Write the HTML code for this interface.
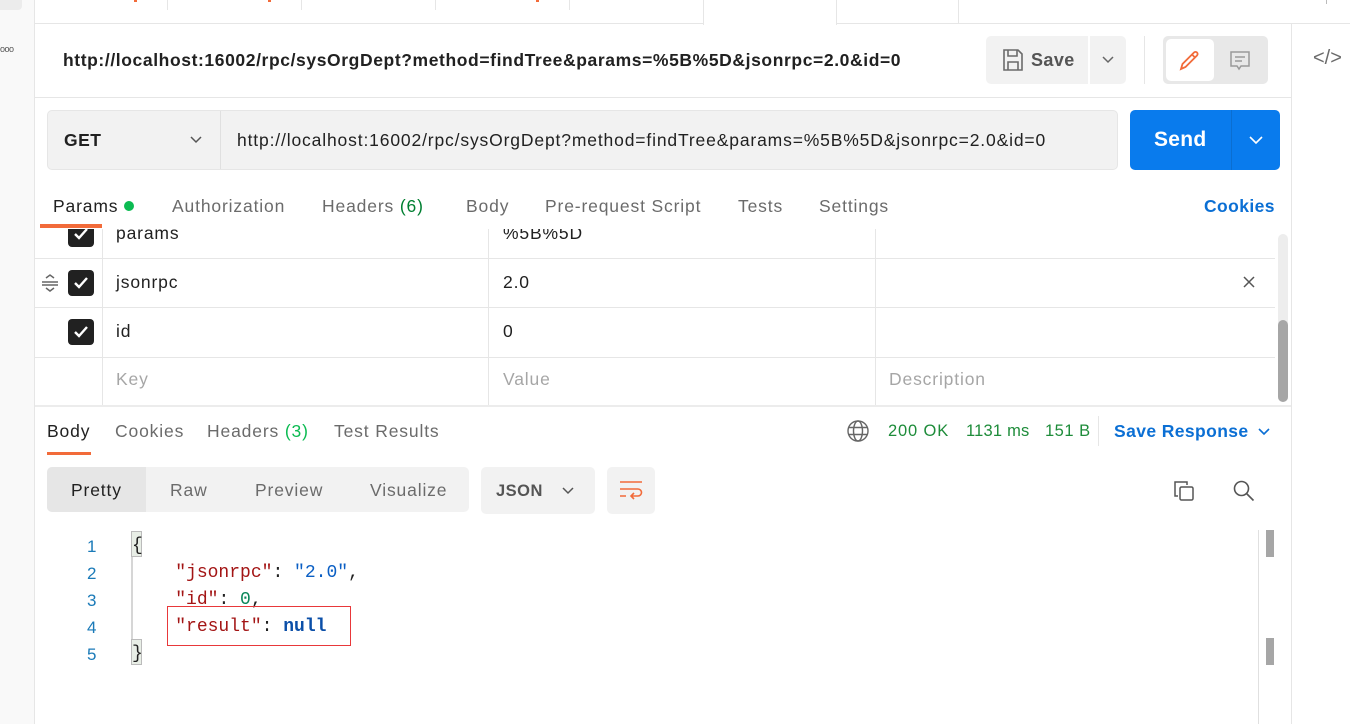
<!DOCTYPE html>
<html><head><meta charset="utf-8"><style>
*{box-sizing:border-box;margin:0;padding:0}
body{width:1350px;height:724px;overflow:hidden;background:#fff;font-family:"Liberation Sans",sans-serif;color:#212121;position:relative}
.a{position:absolute}
.t{font-size:17.5px;white-space:nowrap;letter-spacing:0.85px}
.mono{font-family:"Liberation Mono",monospace;font-size:18px;white-space:pre}
.cb{position:absolute;width:26px;height:26px;background:#212121;border-radius:4px}
.cb svg{position:absolute;left:4px;top:4px}
.hl{position:absolute;left:35px;width:1240px;height:1px;background:#e6e6e6}
</style></head><body>
<div class="a" style="left:0;top:0;width:35px;height:724px;background:#f9f9f9;border-right:1px solid #e6e6e6"></div>
<div class="a" style="left:0;top:0;width:22px;height:10px;background:#ececec;border-radius:0 0 4px 0"></div>
<div class="a" style="left:0;top:44px;font-size:9px;color:#555;letter-spacing:-0.5px">ooo</div>
<div class="a" style="left:35px;top:0;width:1315px;height:24px;border-bottom:1px solid #e6e6e6"></div>
<div class="a" style="left:703px;top:0;width:134px;height:25px;background:#fff;border-left:1px solid #e6e6e6;border-right:1px solid #e6e6e6"></div>
<div class="a" style="left:167px;top:0;width:1px;height:10px;background:#e6e6e6"></div>
<div class="a" style="left:301px;top:0;width:1px;height:10px;background:#e6e6e6"></div>
<div class="a" style="left:435px;top:0;width:1px;height:10px;background:#e6e6e6"></div>
<div class="a" style="left:569px;top:0;width:1px;height:10px;background:#e6e6e6"></div>
<div class="a" style="left:958px;top:0;width:1px;height:24px;background:#e6e6e6"></div>
<div class="a" style="left:134px;top:0;width:3px;height:2px;background:#f26b3a"></div>
<div class="a" style="left:268px;top:0;width:3px;height:2px;background:#f26b3a"></div>
<div class="a" style="left:536px;top:0;width:3px;height:2px;background:#f26b3a"></div>
<div class="a" style="left:1326px;top:0;width:1px;height:4px;background:#bbb"></div>
<div class="a" style="left:1291px;top:24px;width:1px;height:700px;background:#e6e6e6"></div>
<div class="a" style="left:1313px;top:47px;font-size:20px;color:#6b6b6b">&lt;/&gt;</div>
<div class="a t" style="left:63px;top:50px;font-weight:bold;font-size:17.5px;letter-spacing:0.6px;color:#212121">http://localhost:16002/rpc/sysOrgDept?method=findTree&amp;params=%5B%5D&amp;jsonrpc=2.0&amp;id=0</div>
<div class="a" style="left:986px;top:36px;width:102px;height:48px;background:#f2f2f2;border-radius:5px 0 0 5px"></div>
<svg class="a" style="left:1002px;top:48px" width="22" height="24" viewBox="0 0 22 24" fill="none" stroke="#6b6b6b" stroke-width="1.6"><path d="M2 2h14l4 4v16H2z"/><path d="M6 2v6h9V2"/><path d="M6 22v-8h10v8"/></svg>
<div class="a t" style="left:1031px;top:50px;font-size:18px;font-weight:bold;color:#555;letter-spacing:0.4px">Save</div>
<div class="a" style="left:1090px;top:36px;width:36px;height:48px;background:#f2f2f2;border-radius:0 5px 5px 0"></div>
<svg class="a" style="left:1101px;top:55px" width="14" height="10"><path d="M2 2l5 5 5-5" stroke="#666" stroke-width="1.5" fill="none"/></svg>
<div class="a" style="left:1144px;top:36px;width:1px;height:48px;background:#e6e6e6"></div>
<div class="a" style="left:1163px;top:36px;width:105px;height:48px;background:#e8e8e8;border-radius:5px"></div>
<div class="a" style="left:1166px;top:39px;width:48px;height:42px;background:#fff;border-radius:5px"></div>
<svg class="a" style="left:1178px;top:48px" width="24" height="24" viewBox="0 0 24 24" fill="none" stroke="#f26b3a" stroke-width="1.8"><path d="M3 21l1.5-5L16 4.5a2.1 2.1 0 013 3L7.5 19z"/><path d="M14 6.5l3 3"/></svg>
<svg class="a" style="left:1229px;top:50px" width="22" height="22" viewBox="0 0 22 22" fill="none" stroke="#999" stroke-width="1.5"><path d="M2 2h18v14H12l-2 3-2-3H2z"/><path d="M6 7h10M6 11h7"/></svg>
<div class="a" style="left:35px;top:97px;width:1256px;height:1px;background:#e6e6e6"></div>
<div class="a" style="left:47px;top:110px;width:1071px;height:60px;background:#f2f2f2;border:1px solid #e6e6e6;border-radius:5px"></div>
<div class="a" style="left:220px;top:111px;width:1px;height:58px;background:#e0e0e0"></div>
<div class="a t" style="left:64px;top:130px;font-weight:bold;color:#212121;letter-spacing:0.5px">GET</div>
<svg class="a" style="left:189px;top:135px" width="14" height="10"><path d="M2 2l5 5 5-5" stroke="#555" stroke-width="1.5" fill="none"/></svg>
<div class="a t" style="left:237px;top:130px;color:#212121">http://localhost:16002/rpc/sysOrgDept?method=findTree&amp;params=%5B%5D&amp;jsonrpc=2.0&amp;id=0</div>
<div class="a" style="left:1130px;top:110px;width:150px;height:60px;background:#097bed;border-radius:5px"></div>
<div class="a" style="left:1231px;top:110px;width:1px;height:60px;background:#0a6ed1"></div>
<div class="a t" style="left:1154px;top:128px;font-size:21px;font-weight:bold;color:#fff;letter-spacing:0.3px">Send</div>
<svg class="a" style="left:1248px;top:135px" width="16" height="10"><path d="M2 2l6 6 6-6" stroke="#fff" stroke-width="1.6" fill="none"/></svg>
<div class="a t" style="left:53px;top:196px;color:#212121">Params</div>
<div class="a" style="left:124px;top:201px;width:10px;height:10px;background:#0cbb52;border-radius:50%"></div>
<div class="a t" style="left:172px;top:196px;color:#6b6b6b">Authorization</div>
<div class="a t" style="left:322px;top:196px;color:#6b6b6b">Headers <span style="color:#007f31">(6)</span></div>
<div class="a t" style="left:466px;top:196px;color:#6b6b6b">Body</div>
<div class="a t" style="left:545px;top:196px;color:#6b6b6b">Pre-request Script</div>
<div class="a t" style="left:738px;top:196px;color:#6b6b6b">Tests</div>
<div class="a t" style="left:819px;top:196px;color:#6b6b6b">Settings</div>
<div class="a t" style="left:1204px;top:196px;font-weight:bold;color:#0b6fd4;letter-spacing:0.4px">Cookies</div>
<div class="a" style="left:35px;top:229px;width:1240px;height:178px;overflow:hidden">
  <div class="cb" style="left:33px;top:-8px"><svg width="18" height="18"><path d="M3 9l4 4 8-9" stroke="#fff" stroke-width="2.4" fill="none"/></svg></div>
  <div class="a t" style="left:81px;top:-6px">params</div>
  <div class="a t" style="left:468px;top:-6px">%5B%5D</div>
</div>
<div class="a" style="left:40px;top:224px;width:62px;height:4px;background:#f26b3a"></div>
<div class="a" style="left:102px;top:229px;width:1px;height:178px;background:#e6e6e6"></div>
<div class="a" style="left:488px;top:229px;width:1px;height:178px;background:#e6e6e6"></div>
<div class="a" style="left:875px;top:229px;width:1px;height:178px;background:#e6e6e6"></div>
<div class="hl" style="top:258px"></div>
<div class="hl" style="top:307px"></div>
<div class="hl" style="top:357px"></div>
<svg class="a" style="left:41px;top:274px" width="18" height="18" viewBox="0 0 18 18" fill="none" stroke="#666" stroke-width="1.5"><path d="M5 4l4-3 4 3M1 8h16M1 11h16M5 14l4 3 4-3"/></svg>
<div class="cb" style="left:68px;top:270px"><svg width="18" height="18"><path d="M3 9l4 4 8-9" stroke="#fff" stroke-width="2.4" fill="none"/></svg></div>
<div class="a t" style="left:116px;top:272px">jsonrpc</div>
<div class="a t" style="left:503px;top:272px">2.0</div>
<svg class="a" style="left:1243px;top:276px" width="12" height="12"><path d="M1 1l10 10M11 1L1 11" stroke="#555" stroke-width="1.5"/></svg>
<div class="cb" style="left:68px;top:319px"><svg width="18" height="18"><path d="M3 9l4 4 8-9" stroke="#fff" stroke-width="2.4" fill="none"/></svg></div>
<div class="a t" style="left:116px;top:321px">id</div>
<div class="a t" style="left:503px;top:321px">0</div>
<div class="a t" style="left:116px;top:369px;color:#a6a6a6">Key</div>
<div class="a t" style="left:503px;top:369px;color:#a6a6a6">Value</div>
<div class="a t" style="left:889px;top:369px;color:#a6a6a6">Description</div>
<div class="a" style="left:1278px;top:234px;width:10px;height:168px;background:#ededed;border-radius:5px"></div>
<div class="a" style="left:1278px;top:320px;width:10px;height:82px;background:#a6a6a6;border-radius:5px"></div>
<div class="a" style="left:35px;top:405px;width:1256px;height:2px;background:#ececec"></div>
<div class="a t" style="left:47px;top:421px;color:#212121">Body</div>
<div class="a" style="left:47px;top:452px;width:44px;height:3px;background:#f26b3a"></div>
<div class="a t" style="left:115px;top:421px;color:#6b6b6b">Cookies</div>
<div class="a t" style="left:207px;top:421px;color:#6b6b6b">Headers <span style="color:#0cbb52">(3)</span></div>
<div class="a t" style="left:334px;top:421px;color:#6b6b6b">Test Results</div>
<svg class="a" style="left:847px;top:420px" width="22" height="22" viewBox="0 0 22 22" fill="none" stroke="#666" stroke-width="1.4"><circle cx="11" cy="11" r="10"/><ellipse cx="11" cy="11" rx="4.5" ry="10"/><path d="M1.5 7.5h19M1.5 14.5h19"/></svg>
<div class="a t" style="left:888px;top:422px;color:#1e8c3a;font-size:16.5px">200 OK</div>
<div class="a t" style="left:966px;top:422px;color:#1e8c3a;font-size:16.5px;letter-spacing:0.2px">1131 ms</div>
<div class="a t" style="left:1045px;top:422px;color:#1e8c3a;font-size:16.5px;letter-spacing:0.5px">151 B</div>
<div class="a" style="left:1098px;top:416px;width:1px;height:30px;background:#e6e6e6"></div>
<div class="a t" style="left:1114px;top:421px;font-weight:bold;color:#0b6fd4;letter-spacing:0.4px">Save Response</div>
<svg class="a" style="left:1257px;top:427px" width="14" height="10"><path d="M2 2l5 5 5-5" stroke="#0b6fd4" stroke-width="1.6" fill="none"/></svg>
<div class="a" style="left:47px;top:467px;width:422px;height:45px;background:#f2f2f2;border-radius:5px"></div>
<div class="a" style="left:47px;top:467px;width:99px;height:45px;background:#e6e6e6;border-radius:5px 0 0 5px"></div>
<div class="a t" style="left:71px;top:480px;color:#212121">Pretty</div>
<div class="a t" style="left:170px;top:480px;color:#6b6b6b">Raw</div>
<div class="a t" style="left:255px;top:480px;color:#6b6b6b">Preview</div>
<div class="a t" style="left:370px;top:480px;color:#6b6b6b">Visualize</div>
<div class="a" style="left:481px;top:467px;width:114px;height:47px;background:#f2f2f2;border-radius:5px"></div>
<div class="a t" style="left:496px;top:482px;font-weight:bold;color:#555;font-size:16.5px;letter-spacing:0.5px">JSON</div>
<svg class="a" style="left:561px;top:486px" width="14" height="10"><path d="M2 2l5 5 5-5" stroke="#555" stroke-width="1.5" fill="none"/></svg>
<div class="a" style="left:607px;top:467px;width:48px;height:47px;background:#f2f2f2;border-radius:5px"></div>
<svg class="a" style="left:619px;top:479px" width="26" height="24" viewBox="0 0 26 24" fill="none" stroke="#f26b3a" stroke-width="1.6"><path d="M1 3h22M1 10h18a3.5 3.5 0 010 7h-6M15 14l-3 3 3 3M1 17h6"/></svg>
<svg class="a" style="left:1173px;top:480px" width="22" height="22" viewBox="0 0 22 22" fill="none" stroke="#555" stroke-width="1.5"><path d="M5 16H2V2h12v3"/><rect x="7" y="7" width="13" height="13" rx="1.5"/></svg>
<svg class="a" style="left:1232px;top:479px" width="24" height="24" viewBox="0 0 24 24" fill="none" stroke="#555" stroke-width="1.6"><circle cx="9.5" cy="9.5" r="7"/><path d="M14.5 14.5l7 7"/></svg>
<div class="a" style="left:1258px;top:530px;width:1px;height:194px;background:#e0e0e0"></div>
<div class="a" style="left:1266px;top:530px;width:8px;height:27px;background:#a6a6a6"></div>
<div class="a" style="left:1266px;top:638px;width:8px;height:27px;background:#a6a6a6"></div>
<div class="a" style="left:131px;top:556px;width:2px;height:86px;background:#d6d6d6"></div>
<div class="a" style="left:131px;top:531px;width:11px;height:26px;background:#e8eee6;border:1px solid #bbb"></div>
<div class="a" style="left:131px;top:639px;width:11px;height:26px;background:#e8eee6;border:1px solid #bbb"></div>
<div class="a mono" style="left:87px;top:533px;line-height:27px;color:#1a7ab8;font-family:'Liberation Sans',sans-serif;font-size:17px">1
2
3
4
5</div>
<div class="a mono" style="left:132px;top:533px;line-height:27px;color:#212121">{
    <span style="color:#a31515">"jsonrpc"</span>: <span style="color:#0b5fc4">"2.0"</span>,
    <span style="color:#a31515">"id"</span>: <span style="color:#098658">0</span>,
    <span style="color:#a31515">"result"</span>: <b style="color:#0b4fa8">null</b>
}</div>
<div class="a" style="left:167px;top:606px;width:184px;height:40px;border:1px solid #e8383a"></div>
</body></html>
